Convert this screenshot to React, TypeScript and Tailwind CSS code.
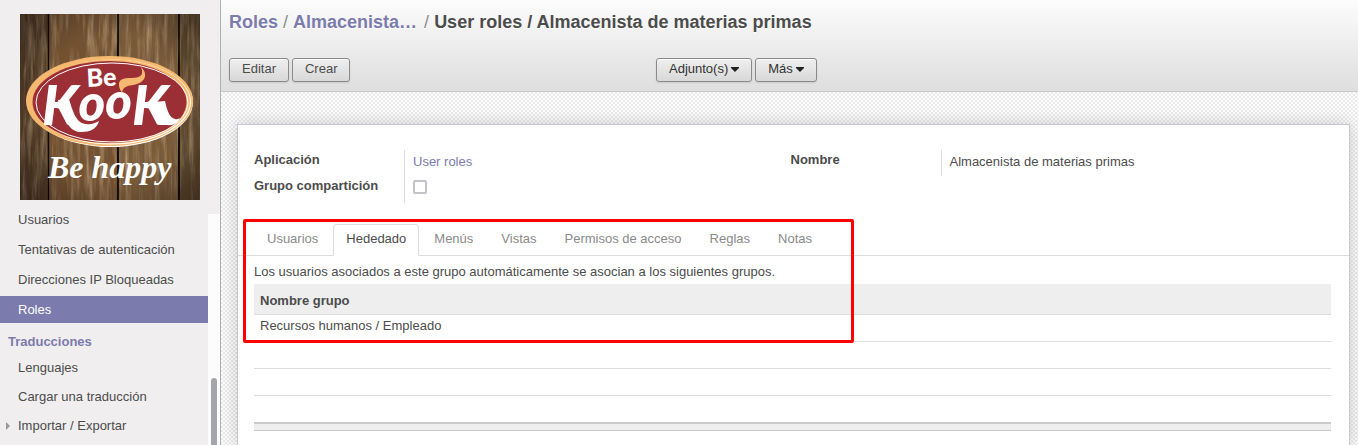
import React, { useState } from 'react';

const planks = [
  { x: 0, w: 28, color: '#533a25' },
  { x: 29, w: 68, color: '#75512f' },
  { x: 99, w: 59, color: '#7d5c38' },
  { x: 160, w: 20, color: '#644a2e' },
];

const tabs = ['Usuarios', 'Hededado', 'Menús', 'Vistas', 'Permisos de acceso', 'Reglas', 'Notas'];

const Logo: React.FC = () => (
  <svg viewBox="0 0 180 186" className="block w-full" role="img" aria-label="Be Kook">
    <defs>
      <filter id="grain" x="0" y="0" width="100%" height="100%">
        <feTurbulence type="fractalNoise" baseFrequency="0.4 0.03" numOctaves="4" seed="8" />
        <feColorMatrix values="0 0 0 0 0.14  0 0 0 0 0.09  0 0 0 0 0.05  1.5 0 0 0 -0.6" />
      </filter>
      <filter id="light" x="0" y="0" width="100%" height="100%">
        <feTurbulence type="fractalNoise" baseFrequency="0.2 0.02" numOctaves="4" seed="21" />
        <feColorMatrix values="0 0 0 0 0.66  0 0 0 0 0.48  0 0 0 0 0.30  0 1.4 0 0 -0.6" />
      </filter>
      <radialGradient id="vignette" cx="50%" cy="50%" r="72%">
        <stop offset="55%" stopColor="#000" stopOpacity="0" />
        <stop offset="100%" stopColor="#000" stopOpacity="0.4" />
      </radialGradient>
    </defs>
    <rect width="180" height="186" fill="#14100d" />
    {planks.map((p) => (
      <rect key={p.x} x={p.x} y="0" width={p.w} height="186" fill={p.color} />
    ))}
    <rect width="180" height="186" filter="url(#light)" />
    <rect width="180" height="186" filter="url(#grain)" />
    <path d="M28.500 0V186M98 0V186M159 0V186" stroke="#0d0a08" strokeWidth="1.400" />
    <rect width="180" height="186" fill="url(#vignette)" />
    <ellipse cx="90.500" cy="88" rx="82.500" ry="45" fill="#fff" />
    <ellipse cx="89.500" cy="87" rx="83.500" ry="45" fill="#f6b96f" />
    <ellipse cx="92" cy="88" rx="79" ry="42.500" fill="#fff" />
    <ellipse cx="91" cy="87.500" rx="79" ry="42" fill="#f6b96f" />
    <ellipse cx="89.500" cy="88" rx="77" ry="41" fill="#9b2f35" />
    <ellipse cx="92" cy="88.500" rx="76" ry="39.500" fill="none" stroke="#fff" strokeWidth="1" />
    <text x="67" y="73" fontSize="25" fontWeight="900" fontFamily="Lato, sans-serif" fill="#fff" transform="rotate(-3 67 73)">Be</text>
    <text x="22" y="111" fontSize="56" fontWeight="900" fontStyle="italic" fontFamily="Lato, sans-serif" fill="#fff">
      K<tspan fontSize="51" dy="-4">o</tspan><tspan fontSize="51" dy="-2">o</tspan><tspan dy="6">K</tspan>
    </text>
    <path d="M38 86L49 85C53 98 56 109 66 110C71 111 75 109 79 107C77 115 70 118 61 118C51 118 47 110 43 100Z" fill="#fff" />
    <path d="M134 88L145 87C147 97 150 104 155 105C157 105.500 159 105 160 104C158 109 153 112 147 111C141 110 138 102 135 94Z" fill="#fff" />
    <path d="M102 79C96 69 99 64 109 64C118 64 125 63 121 53C131 63 121 70 113 71C106 72 103 73 102 79Z" fill="#f6b96f" />
    <text x="28" y="164" fontSize="32" fontWeight="700" fontStyle="italic" fontFamily="'Liberation Serif', serif" fill="#fff">Be happy</text>
  </svg>
);

const MenuItem: React.FC<{ label: string; active?: boolean; parent?: boolean }> = ({ label, active, parent }) => (
  <li>
    <a
      href="#"
      className={`flex h-[27px] items-center text-[13px] leading-none ${active ? 'bg-[#7c7bad] text-white' : 'text-[#4c4c4c]'}`}
    >
      <span className="flex w-[18px] pl-1.5">
        {parent && (
          <svg viewBox="0 0 4 8" className="h-2 w-1 fill-[#999]">
            <path d="M0 0L4 4L0 8Z" />
          </svg>
        )}
      </span>
      {label}
    </a>
  </li>
);

const Button: React.FC<{ label: string; dropdown?: boolean }> = ({ label, dropdown }) => (
  <button
    type="button"
    className={`flex h-6 items-center gap-[3px] rounded-[3px] border border-[#8a8a8a] bg-linear-to-b from-[#efefef] to-[#d8d8d8] px-3 pb-0.5 text-[13px] shadow-[0_1px_2px_rgba(0,0,0,0.1),inset_0_1px_1px_rgba(255,255,255,0.8)] ${dropdown ? 'text-[#333]' : 'text-[#4c4c4c]'}`}
  >
    {label}
    {dropdown && (
      <svg viewBox="0 0 8 5" className="h-[5px] w-2 fill-[#222]">
        <path d="M0 0H8V1L4 5L0 1Z" />
      </svg>
    )}
  </button>
);

const App: React.FC = () => {
  const [activeTab, setActiveTab] = useState('Hededado');

  return (
    <div className="flex h-screen overflow-hidden bg-white font-['Liberation_Sans',Arial,sans-serif] text-[13px] text-[#4c4c4c]">
      <aside className="flex w-[221px] shrink-0 flex-col border-r border-[#afafb6] bg-[#f0eeee]">
        <div className="px-5 py-3.5">
          <Logo />
        </div>
        <div className="flex grow">
          <nav className="w-52">
            <ul className="-mt-2 flex flex-col gap-[3px]">
              <MenuItem label="Usuarios" />
              <MenuItem label="Tentativas de autenticación" />
              <MenuItem label="Direcciones IP Bloqueadas" />
              <MenuItem label="Roles" active />
            </ul>
            <h2 className="mt-[9px] pl-2 text-[13px] leading-5 font-bold text-[#7c7bad]">Traducciones</h2>
            <ul className="mt-0.5 flex flex-col gap-0.5">
              <MenuItem label="Lenguajes" />
              <MenuItem label="Cargar una traducción" />
              <MenuItem label="Importar / Exportar" parent />
            </ul>
          </nav>
          <div className="flex grow justify-center bg-[#fcfcfc] pt-[164px]">
            <div className="w-1.5 rounded-t-full bg-[#a5a6ad]"></div>
          </div>
        </div>
      </aside>

      <main className="flex min-w-0 grow flex-col">
        <header className="border-b border-[#cacaca] bg-linear-to-b from-[#fcfcfc] to-[#dedede] px-2 pt-2.5 pb-[9px]">
          <h1 className="flex gap-[5px] text-[18px] leading-6 text-[#8c8c8c] text-shadow-[0_1px_1px_#fff]">
            <a href="#" className="font-bold text-[#7c7bad]">Roles</a>
            <span>/</span>
            <a href="#" className="mr-0.5 font-bold text-[#7c7bad]">Almacenista…</a>
            <span>/</span>
            <span className="font-bold text-[#4c4c4c]">User roles / Almacenista de materias primas</span>
          </h1>
          <div className="mt-6 grid grid-cols-[427px_1fr]">
            <div className="flex gap-[3px]">
              <Button label="Editar" />
              <Button label="Crear" />
            </div>
            <div className="flex gap-[3px]">
              <Button label="Adjunto(s)" dropdown />
              <Button label="Más" dropdown />
            </div>
          </div>
        </header>

        <div className="flex grow bg-[#fcfcfc] bg-[repeating-conic-gradient(#eaeaea_0_25%,#fdfdfd_0_50%)] bg-size-[4px_4px] pt-8 pr-2 pl-4">
          <section className="min-w-0 grow border border-b-0 border-[#c8c8d3] bg-white shadow-[0_0_16px_rgba(0,0,0,0.18)]">
            <div className="grid grid-cols-2 pt-[25px] pr-[22px] pl-4">
              <div className="grid grid-cols-[150px_1fr]">
                <div className="flex flex-col gap-1.5 leading-5 font-bold">
                  <span>Aplicación</span>
                  <label htmlFor="shared">Grupo compartición</label>
                </div>
                <div className="flex h-[53px] flex-col gap-2 border-l border-[#ddd] pl-2">
                  <a href="#" className="leading-6 text-[#7c7bad]">User roles</a>
                  <input
                    id="shared"
                    type="checkbox"
                    className="-mt-0.5 size-3.5 appearance-none rounded-xs border-2 border-[#c3c3cc] bg-white"
                  />
                </div>
              </div>
              <div className="grid grid-cols-[150px_1fr] items-start">
                <span className="leading-5 font-bold">Nombre</span>
                <span className="border-l border-[#ddd] pb-0.5 pl-2 leading-6">Almacenista de materias primas</span>
              </div>
            </div>

            <div className="relative mt-[21px]">
              <div role="tablist" className="flex border-b border-[#ddd] pl-4">
                {tabs.map((tab) => (
                  <button
                    key={tab}
                    type="button"
                    role="tab"
                    aria-selected={tab === activeTab}
                    onClick={() => setActiveTab(tab)}
                    className={`-mb-px mr-0.5 h-8 rounded-t border px-3 pb-0.5 ${tab === activeTab ? 'border-[#ddd] border-b-white bg-white text-[#4c4c4c]' : 'border-transparent text-[#8a8a8a]'}`}
                  >
                    {tab}
                  </button>
                ))}
              </div>
              <div className="pr-[18px] pl-4">
                <p className="pt-1.5 pb-0.5 leading-5">
                  Los usuarios asociados a este grupo automáticamente se asocian a los siguientes grupos.
                </p>
                <table className="w-full border-collapse text-left">
                  <thead>
                    <tr className="h-[30px] border-b border-[#ddd] bg-[#eee]">
                      <th className="px-1.5 pt-1 font-bold">Nombre grupo</th>
                    </tr>
                  </thead>
                  <tbody>
                    <tr className="h-[27px] border-b border-[#ddd]">
                      <td className="px-1.5 pb-1">Recursos humanos / Empleado</td>
                    </tr>
                    <tr className="h-[27px] border-b border-[#ddd]"><td></td></tr>
                    <tr className="h-[27px] border-b border-[#ddd]"><td></td></tr>
                    <tr className="h-7"><td></td></tr>
                  </tbody>
                  <tfoot>
                    <tr className="h-[7px] border-t-2 border-b border-[#cacaca] bg-[#eee]"><td className="p-0"></td></tr>
                  </tfoot>
                </table>
              </div>
              <div className="pointer-events-none absolute -top-[5px] left-[5px] h-[124px] w-[611px] rounded-xs border-3 border-[#ff0000]"></div>
            </div>
          </section>
        </div>
      </main>
    </div>
  );
};

export default App;
